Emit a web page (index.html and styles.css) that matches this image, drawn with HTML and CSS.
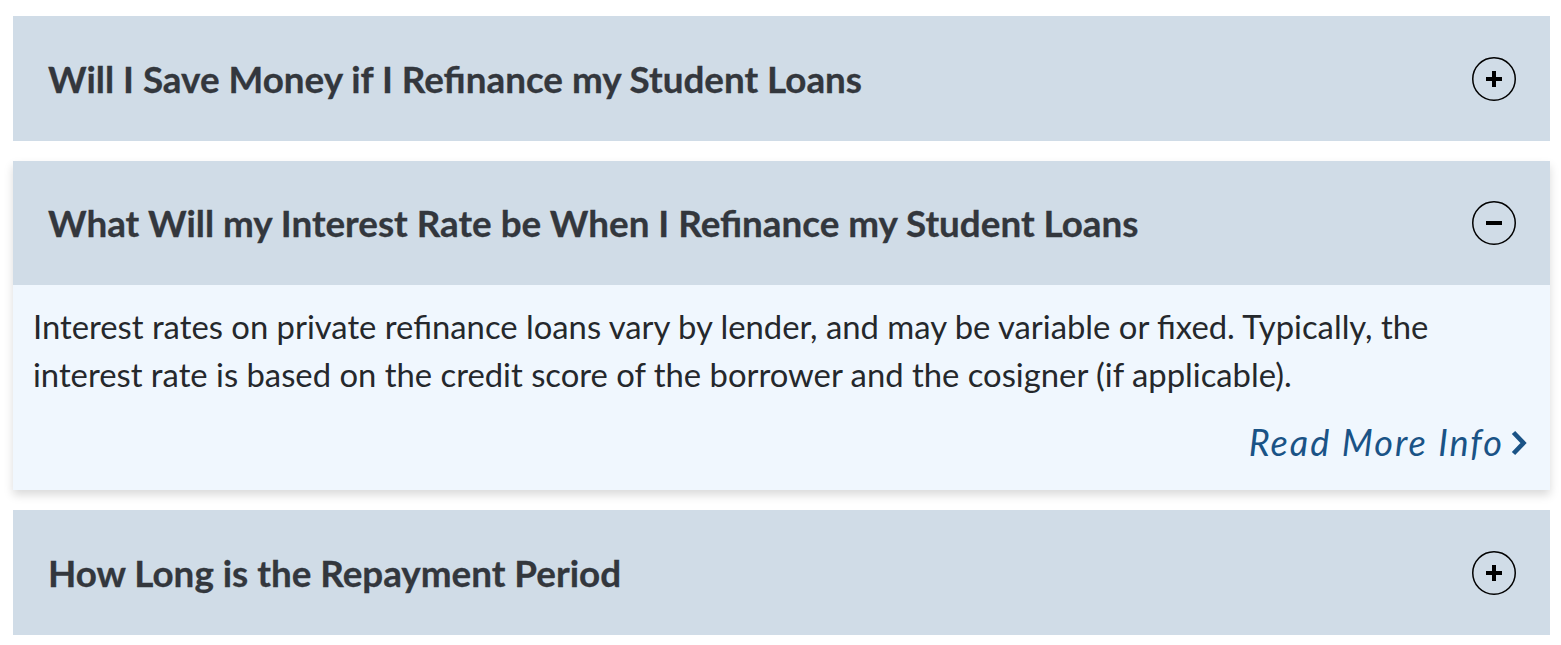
FILE: index.html
```html
<!DOCTYPE html>
<html lang="en">
<head>
<meta charset="utf-8">
<title>FAQ</title>
<link rel="stylesheet" href="styles.css">
</head>
<body>
<div class="accordion">
  <div class="item">
    <div class="header">
      <h3 class="title">Will I Save Money if I Refinance my Student Loans</h3>
      <span class="toggle">
        <svg viewBox="0 0 44 44" width="44" height="44"><circle cx="22" cy="22" r="21.25" fill="none" stroke="#000" stroke-width="1.5"/><path d="M22 14v16M14 22h16" stroke="#000" stroke-width="4" fill="none"/></svg>
      </span>
    </div>
  </div>
  <div class="item open">
    <div class="header">
      <h3 class="title">What Will my Interest Rate be When I Refinance my Student Loans</h3>
      <span class="toggle">
        <svg viewBox="0 0 44 44" width="44" height="44"><circle cx="22" cy="22" r="21.25" fill="none" stroke="#000" stroke-width="1.5"/><path d="M14 22h16" stroke="#000" stroke-width="4" fill="none"/></svg>
      </span>
    </div>
    <div class="body">
      <p class="text">Interest rates on private refinance loans vary by lender, and may be variable or fixed. Typically, the interest rate is based on the credit score of the borrower and the cosigner (if applicable).</p>
      <div class="more-row">
        <a class="more" href="#">Read More Info<svg class="chev" viewBox="0 0 18 26" width="18" height="26"><path d="M3.5 2.5l10 10.5-10 10.5" fill="none" stroke="#1a5386" stroke-width="4.6"/></svg></a>
      </div>
    </div>
  </div>
  <div class="item">
    <div class="header">
      <h3 class="title">How Long is the Repayment Period</h3>
      <span class="toggle">
        <svg viewBox="0 0 44 44" width="44" height="44"><circle cx="22" cy="22" r="21.25" fill="none" stroke="#000" stroke-width="1.5"/><path d="M22 14v16M14 22h16" stroke="#000" stroke-width="4" fill="none"/></svg>
      </span>
    </div>
  </div>
</div>
</body>
</html>
```
FILE: styles.css
```css
* { box-sizing: border-box; }
body {
  margin: 0;
  background: #ffffff;
  font-family: Lato, "Noto Sans", sans-serif;
  color: #33373d;
}
.accordion {
  margin: 16px 11px 0 13px;
  display: flex;
  flex-direction: column;
  gap: 20px;
}
.item.open {
  box-shadow: 0 5px 9px rgba(0,0,0,0.15);
}
.header {
  background: #d0dce7;
  height: 125px;
  display: flex;
  align-items: center;
  justify-content: space-between;
  padding: 0 34px 0 35px;
}
.item.open .header { height: 124px; }
.title {
  margin: 0;
  font-size: 36.8px;
  font-weight: 700;
  color: #33373d;
  -webkit-text-stroke: 0.3px #33373d;
}
.toggle { display: flex; }
.body {
  background: #f0f7fe;
  padding: 18px 22px 26px 20px;
}
.text {
  margin: 0;
  font-size: 32.8px;
  line-height: 48px;
  color: #25282c;
}
.more-row {
  display: flex;
  justify-content: flex-end;
  margin-top: 22px;
}
.more {
  display: flex;
  align-items: center;
  gap: 6px;
  font-size: 36px;
  line-height: 43px;
  font-style: italic;
  letter-spacing: 2px;
  color: #1a5386;
  text-decoration: none;
}
.chev { display: block; }
```
